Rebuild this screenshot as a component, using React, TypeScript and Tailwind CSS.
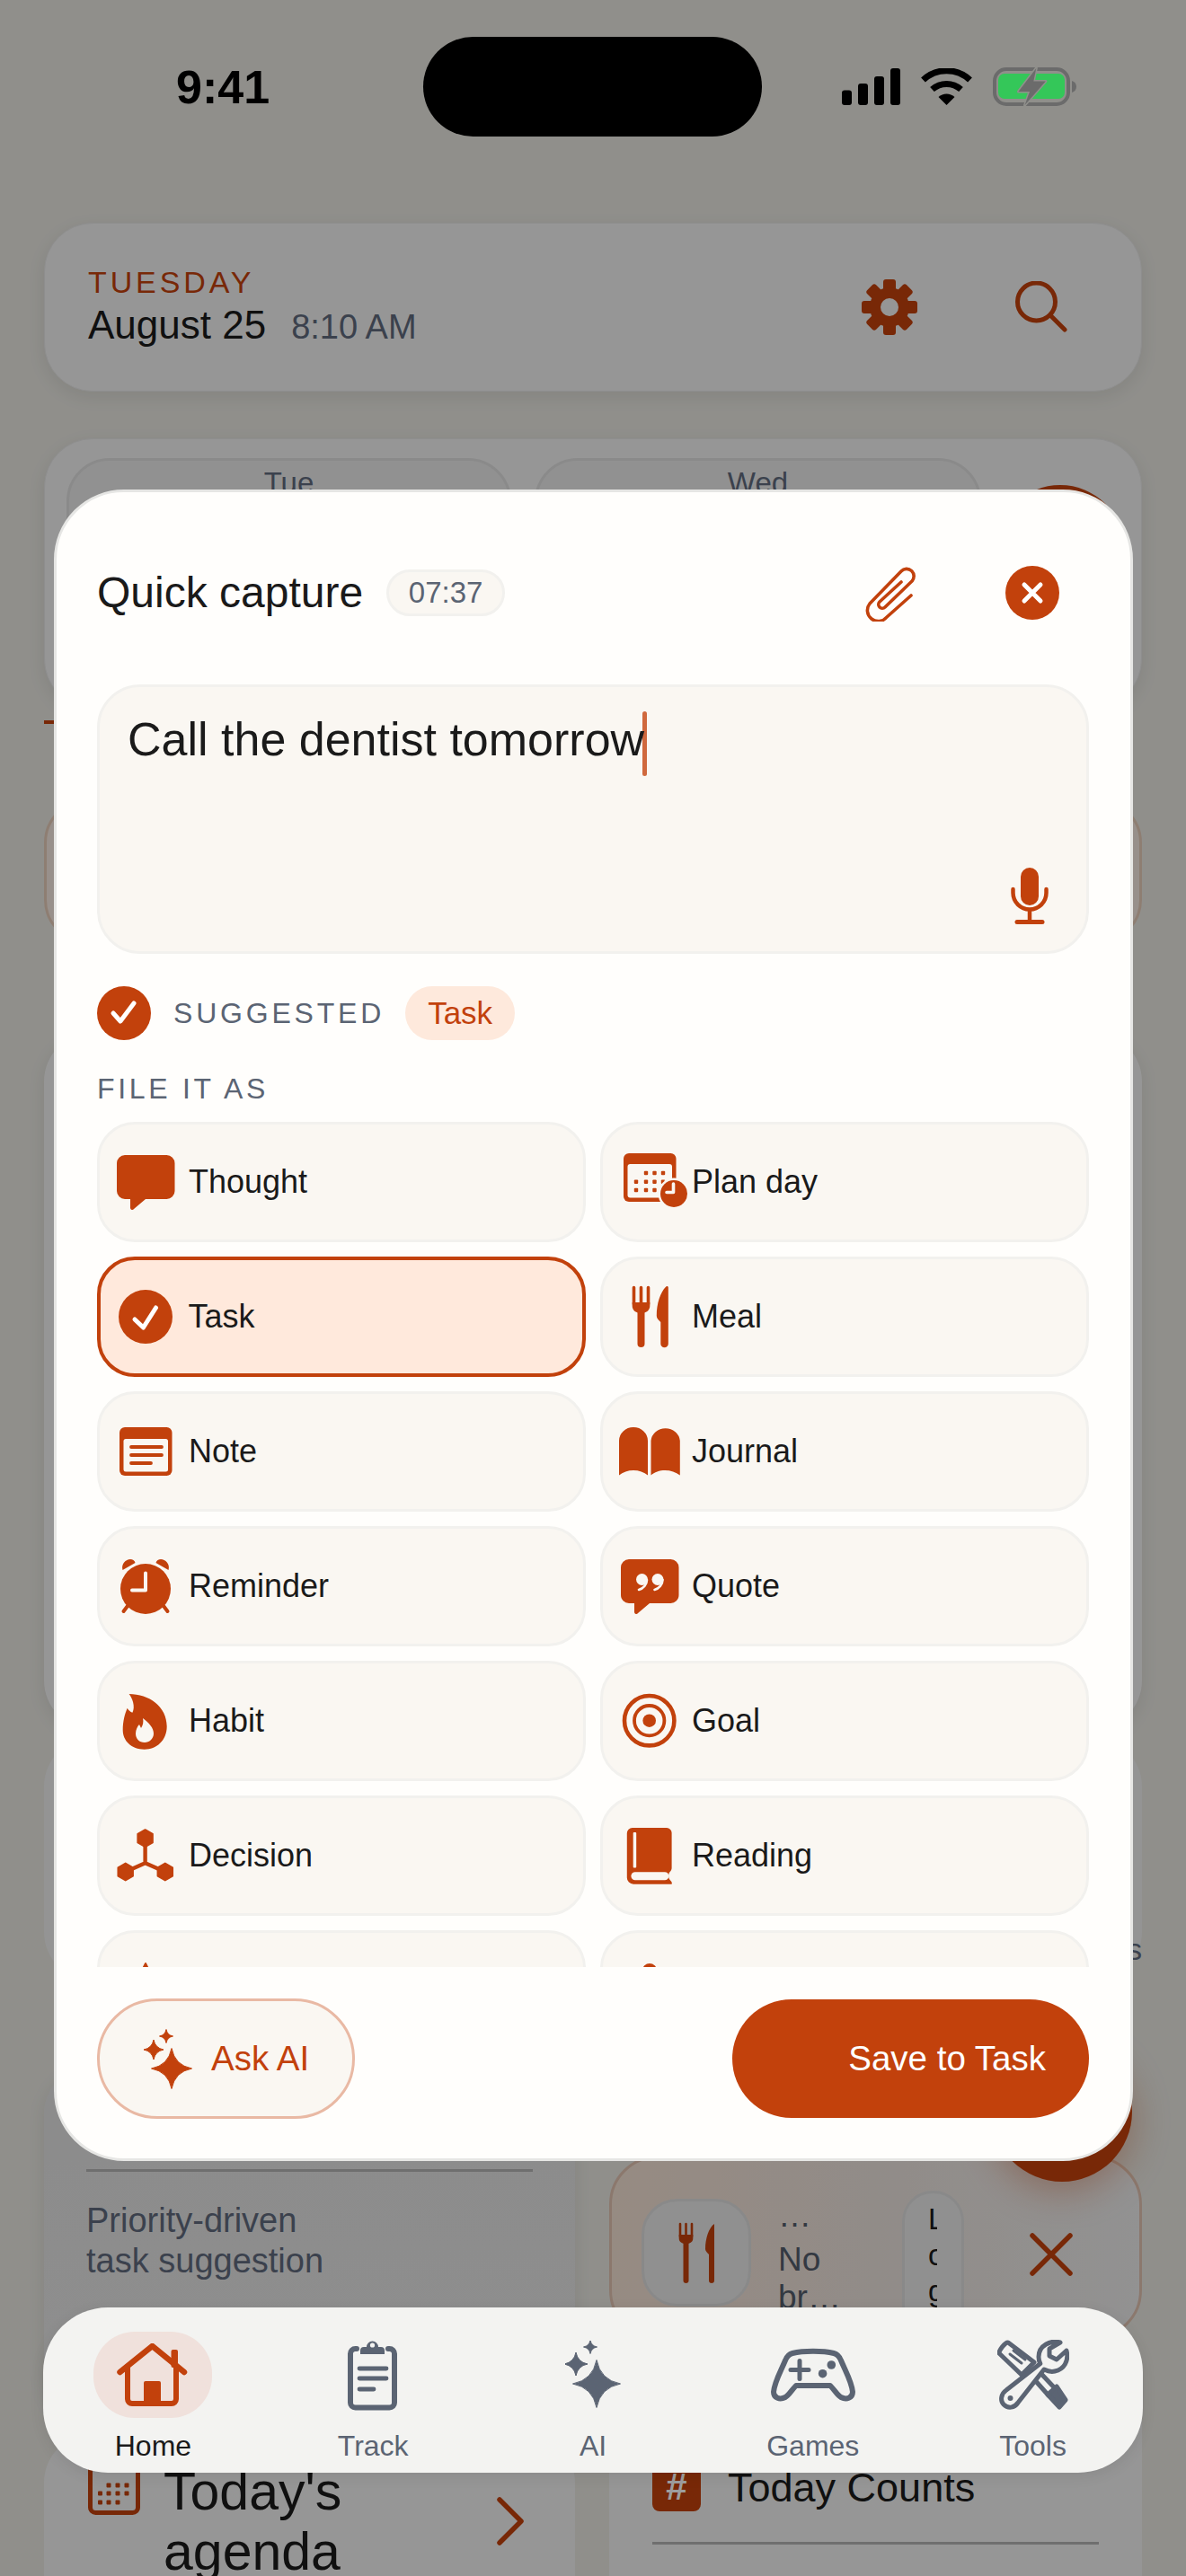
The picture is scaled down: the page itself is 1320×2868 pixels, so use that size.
import React from "react";

const ORANGE = "#c2410c";
const ITEM_BG = "#faf7f2";

// four point star used by the AI sparkles
function starPath(cx: number, cy: number, r: number) {
  const k = r * 0.16;
  return `M${cx} ${cy - r}Q${cx + k} ${cy - k} ${cx + r} ${cy}Q${cx + k} ${cy + k} ${cx} ${cy + r}Q${cx - k} ${cy + k} ${cx - r} ${cy}Q${cx - k} ${cy - k} ${cx} ${cy - r}Z`;
}

function hexPoints(cx: number, cy: number, r: number) {
  return [0, 60, 120, 180, 240, 300]
    .map((a) => {
      const t = (a * Math.PI) / 180;
      return `${cx + r * Math.sin(t)},${cy - r * Math.cos(t)}`;
    })
    .join(" ");
}

function IconBox({ children }: { children: React.ReactNode }) {
  return (
    <svg width="72" height="72" viewBox="0 0 72 72" className="shrink-0 overflow-visible" fill={ORANGE}>
      {children}
    </svg>
  );
}

const ThoughtIcon = () => (
  <IconBox>
    <path d="M13 6h46.5a9 9 0 0 1 9 9v31a9 9 0 0 1-9 9H36L23 66a2.2 2.2 0 0 1-4-1V55h-6a9 9 0 0 1-9-9V15a9 9 0 0 1 9-9z" />
  </IconBox>
);

const CheckIcon = () => (
  <IconBox>
    <circle cx="36" cy="36" r="30" />
    <path d="M24 39L33.5 48L47.5 26" fill="none" stroke="#fff" strokeWidth="5" strokeLinecap="round" strokeLinejoin="round" />
  </IconBox>
);

const NoteIcon = () => (
  <IconBox>
    <rect x="7" y="9" width="58.5" height="54" rx="6" />
    <rect x="11.5" y="22" width="49.5" height="36.5" rx="2.5" fill={ITEM_BG} />
    <path d="M20 31H54M20 40H54M20 49H42" stroke={ORANGE} strokeWidth="3.8" strokeLinecap="round" fill="none" />
  </IconBox>
);

const PlanDayIcon = () => (
  <IconBox>
    <rect x="8" y="4" width="58.5" height="54" rx="6" />
    <rect x="12.5" y="16" width="49.5" height="37.5" rx="3" fill={ITEM_BG} />
    {[
      [33, 26], [42.5, 26], [52, 26],
      [22, 35.7], [33, 35.7], [42.5, 35.7], [52, 35.7],
      [22, 45], [33, 45], [42.5, 45],
    ].map(([x, y]) => (
      <rect key={`${x}-${y}`} x={x - 2.2} y={y - 2.2} width="4.4" height="4.4" rx="1" />
    ))}
    <circle cx="64" cy="49" r="17.5" fill={ITEM_BG} />
    <circle cx="64" cy="49" r="15" />
    <path d="M63.5 38V47.5H56" stroke={ITEM_BG} strokeWidth="3.6" fill="none" strokeLinecap="round" strokeLinejoin="round" />
  </IconBox>
);

const MealIcon = () => (
  <IconBox>
    <path d="M19.5 3.5V22M27.5 3.5V22M35.5 3.5V22" stroke={ORANGE} strokeWidth="3.6" strokeLinecap="round" fill="none" />
    <path d="M17.7 20H37.3V24C37.3 29 33 32 27.5 32C22 32 17.7 29 17.7 24Z" />
    <rect x="23.5" y="28" width="8" height="42" rx="4" />
    <path d="M57.8 3.5C57.8 2 56 1.5 55 2.8C49 9 44.8 21 44.8 35C44.8 38 47 39.5 49.3 42V66A4.2 4.2 0 0 0 57.8 66Z" />
  </IconBox>
);

const JournalIcon = () => (
  <IconBox>
    <path d="M3 24a16 15 0 0 1 32 0V62.5C27 55 11 55 3 62.5Z" />
    <path d="M38.5 24a16.2 15 0 0 1 32.3 0V62.5C62 55 46 55 38.5 62.5Z" />
  </IconBox>
);

const ReminderIcon = () => (
  <IconBox>
    <circle cx="36" cy="39" r="28" />
    <path d="M10.5 18C8.5 11 14 6 19 6C21.5 6 24 7.5 24.5 10Z" />
    <path d="M61.5 18C63.5 11 58 6 53 6C50.5 6 48 7.5 47.5 10Z" />
    <path d="M16 58L11.5 64M56 58L60.5 64" stroke={ORANGE} strokeWidth="4" strokeLinecap="round" />
    <path d="M36 21.5V40.5H21" stroke={ITEM_BG} strokeWidth="4" fill="none" strokeLinecap="round" strokeLinejoin="round" />
  </IconBox>
);

const QuoteIcon = () => (
  <IconBox>
    <path d="M14 6h46.5a9 9 0 0 1 9 9v31a9 9 0 0 1-9 9H37L24 66a2.2 2.2 0 0 1-4-1V55h-6a9 9 0 0 1-9-9V15a9 9 0 0 1 9-9z" />
    <g fill={ITEM_BG}>
      <circle cx="28.5" cy="28.5" r="6.5" />
      <circle cx="46" cy="28.5" r="6.5" />
    </g>
    <path d="M34 29C34 34 30 38.5 25 40M51.5 29C51.5 34 47.5 38.5 42.5 40" stroke={ITEM_BG} strokeWidth="2.6" fill="none" strokeLinecap="round" />
  </IconBox>
);

const HabitIcon = () => (
  <IconBox>
    <path d="M17.6 6C40 6 59.7 20 59.7 42C59.7 58 48 67.7 34.8 67.7C20 67.7 10.7 58 10.7 46C10.7 36 13 28 15.7 21.7C17 24 19 26 21.4 26.7C25 20 21 10 17.6 6Z" />
    <path d="M33 33C40 38 45 44 45 50C45 56 40 60 35 60C29 60 25 56 25 50C25 46 27 42 29 40L31 44C33 41 34 37 33 33Z" fill={ITEM_BG} />
  </IconBox>
);

const GoalIcon = () => (
  <IconBox>
    <circle cx="36.7" cy="35.7" r="27.7" fill="none" stroke={ORANGE} strokeWidth="4.6" />
    <circle cx="36.7" cy="35.7" r="16.7" fill="none" stroke={ORANGE} strokeWidth="3.8" />
    <circle cx="36.7" cy="35.7" r="7.3" />
  </IconBox>
);

const DecisionIcon = () => (
  <IconBox>
    <path d="M35.6 16.7V44.3M35.6 44.3L13.7 54M35.6 44.3L57.8 54" stroke={ORANGE} strokeWidth="4.4" fill="none" />
    <polygon points={hexPoints(35.6, 16.7, 9.5)} stroke={ORANGE} strokeWidth="2" strokeLinejoin="round" />
    <polygon points={hexPoints(13.7, 54, 9.5)} stroke={ORANGE} strokeWidth="2" strokeLinejoin="round" />
    <polygon points={hexPoints(57.8, 54, 9.5)} stroke={ORANGE} strokeWidth="2" strokeLinejoin="round" />
  </IconBox>
);

const ReadingIcon = () => (
  <IconBox>
    <path d="M18 5H56A5.6 5.6 0 0 1 61.6 10.6V50C61.6 51.5 60.6 53 59.6 54C57.6 56 57.6 61 59.6 63C60.6 64 62.6 66 61.6 67.7H19A7.2 7.2 0 0 1 11.8 60.5V11A6 6 0 0 1 18 5Z" />
    <rect x="18.7" y="10" width="3.5" height="39.5" rx="1" fill={ITEM_BG} />
    <rect x="16.4" y="54.3" width="42" height="9" rx="4.5" fill={ITEM_BG} />
  </IconBox>
);

const TriangleStub = () => (
  <IconBox>
    <path d="M36 6L62 58H10Z" stroke={ORANGE} strokeWidth="2" strokeLinejoin="round" />
  </IconBox>
);

const PinStub = () => (
  <IconBox>
    <circle cx="37" cy="14" r="8" />
  </IconBox>
);

function FileItem({ label, icon, selected }: { label?: string; icon: React.ReactNode; selected?: boolean }) {
  return (
    <div
      className={
        selected
          ? "flex h-[134px] items-center gap-[12px] rounded-[42px] border-[4.5px] border-[#c2410c] bg-[#ffe9dc] pl-[13.5px]"
          : "flex h-[134px] items-center gap-[12px] rounded-[42px] border-[3px] border-[#f2f1ee] bg-[#faf7f2] pl-[15px]"
      }
    >
      {icon}
      {label && <span className="text-[36px] leading-[44px] text-[#1a1a1a]">{label}</span>}
    </div>
  );
}

function Sparkles({ w, h, stars, color }: { w: number; h: number; stars: number[][]; color: string }) {
  return (
    <svg width={w} height={h} viewBox={`0 0 ${w} ${h}`} fill={color} className="shrink-0">
      {stars.map(([x, y, r]) => (
        <path key={`${x}-${y}`} d={starPath(x, y, r)} stroke={color} strokeWidth="1" strokeLinejoin="round" />
      ))}
    </svg>
  );
}

function NavItem({ label, active, children }: { label: string; active?: boolean; children: React.ReactNode }) {
  return (
    <div className="flex flex-col items-center">
      <div className={active ? "flex h-[96px] w-[132px] items-center justify-center rounded-[46px] bg-[#f0e1dc]" : "flex h-[96px] w-[132px] items-center justify-center"}>
        {children}
      </div>
      <span className={active ? "mt-[12px] text-[32px] leading-[38px] text-[#1a1a1a]" : "mt-[12px] text-[32px] leading-[38px] text-[#5b6473]"}>{label}</span>
    </div>
  );
}

function Background() {
  const teeth = [0, 45, 90, 135, 180, 225, 270, 315];
  return (
    <div className="flex flex-col px-[49px] pt-[248px]">
      {/* date header */}
      <div className="flex h-[188px] items-center rounded-[54px] border border-[#e6e6e6] bg-[#f2f2f2] pl-[48px] pr-[82px] shadow-[0_6px_20px_rgba(0,0,0,0.08)]">
        <div>
          <p className="text-[34px] leading-[40px] tracking-[3.9px] text-[#c2410c]">TUESDAY</p>
          <p className="mt-[2px] flex items-baseline text-[44px] leading-[52px] text-[#1a1a1a]">
            August 25
            <span className="ml-[28px] text-[38px] text-[#606a7c]">8:10 AM</span>
          </p>
        </div>
        <svg width="62" height="62" viewBox="0 0 62 62" fill={ORANGE} className="ml-auto">
          {teeth.map((a) => (
            <rect key={a} x="24" y="0" width="14" height="16" rx="3" transform={`rotate(${a} 31 31)`} />
          ))}
          <circle cx="31" cy="31" r="22" />
          <circle cx="31" cy="31" r="10" fill="#f2f2f2" />
        </svg>
        <svg width="58" height="58" viewBox="0 0 58 58" fill="none" stroke={ORANGE} strokeWidth="5" strokeLinecap="round" className="ml-[109px]">
          <circle cx="23.5" cy="23" r="21" />
          <path d="M39 38L55 54" />
        </svg>
      </div>

      {/* week strip */}
      <div className="mt-[52px] flex h-[300px] gap-[26px] rounded-[54px] border border-[#e6e6e6] bg-[#f2f2f2] pl-[24px] pt-[21px] shadow-[0_6px_20px_rgba(0,0,0,0.08)]">
        <div className="h-[200px] w-[495px] rounded-[48px] border-[3px] border-[#dfdfdf] bg-[#ebebeb] pt-[5px] text-center text-[33px] leading-[40px] text-[#606a7c]">Tue</div>
        <div className="h-[200px] w-[497px] rounded-[48px] border-[3px] border-[#dfdfdf] bg-[#ebebeb] pt-[5px] text-center text-[33px] leading-[40px] text-[#606a7c]">Wed</div>
      </div>

      <div className="mt-[14px] h-[4px] w-[30px] bg-[#c2410c]" />
      <div className="mt-[84px] h-[160px] rounded-[48px] border-[3px] border-[#e6cbb9] bg-[#f6e9e0]" />
      <div className="mt-[100px] h-[775px] rounded-[54px] bg-[#f2f2f2] shadow-[0_6px_20px_rgba(0,0,0,0.08)]" />

      {/* two column cards */}
      <div className="mt-[10px] grid grid-cols-[591px_593px] gap-x-[38px]">
        <div className="flex flex-col">
          <div className="h-[270px] rounded-[54px] bg-[#efefef]" />
          <div className="mt-[95px] h-[395px] rounded-[54px] bg-gradient-to-b from-[#e2e2e2] to-[#e6e6e6] px-[47px] shadow-[0_6px_20px_rgba(0,0,0,0.08)]">
            <div className="mt-[115px] h-[3px] bg-[#b4b4b4]" />
            <p className="mt-[32px] text-[38px] leading-[45px] text-[#606a7c]">
              Priority-driven
              <br />
              task suggestion
            </p>
          </div>
          <div className="mt-[15px] flex h-[300px] items-start rounded-[54px] bg-[#f2f2f2] pl-[49px] pt-[28px]">
            <svg width="58" height="62" viewBox="0 0 58 62" fill={ORANGE} className="shrink-0">
              <rect x="2.5" y="2.5" width="53" height="57" rx="6" fill="none" stroke={ORANGE} strokeWidth="5" />
              {[
                [23, 29], [33, 29], [43, 29],
                [13.5, 38], [23, 38], [33, 38], [43, 38],
                [13.5, 48], [23, 48], [33, 48],
              ].map(([x, y]) => (
                <rect key={`${x}-${y}`} x={x - 2.5} y={y - 2.5} width="5" height="5" rx="1" />
              ))}
            </svg>
            <p className="ml-[26px] mt-[3px] w-[260px] text-[59px] leading-[67px] text-[#1a1a1a]">Today's agenda</p>
            <svg width="30" height="54" viewBox="0 0 30 54" fill="none" stroke={ORANGE} strokeWidth="5.5" strokeLinecap="round" strokeLinejoin="round" className="ml-[111px] mt-[42px]">
              <path d="M3 3L27 27L3 51" />
            </svg>
          </div>
        </div>

        <div className="flex flex-col">
          <div className="h-[270px] rounded-[54px] bg-[#efefef] pt-[216px] text-right text-[33px] leading-[40px] text-[#606a7c]">s</div>
          <div className="mt-[195px] flex h-[204px] items-start overflow-hidden rounded-[54px] border-[3px] border-[#e0c2b0] bg-gradient-to-r from-[#f3e0d2] via-[#ebe2dc] to-[#ececec] pl-[33px]">
            <div className="mt-[45px] flex h-[120px] w-[122px] shrink-0 items-center justify-center rounded-[40px] border-[3px] border-[#dedede] bg-[#e8e8e8]">
              <svg width="40" height="68" viewBox="0 0 40 68" fill={ORANGE}>
                <path d="M2 2V16M8.5 2V16M15 2V16" stroke={ORANGE} strokeWidth="2.6" strokeLinecap="round" fill="none" />
                <path d="M.7 14H16.3V18C16.3 22 13 24 8.5 24C4 24 .7 22 .7 18Z" />
                <rect x="5.5" y="20" width="6" height="48" rx="3" />
                <path d="M40 2C34 6 30 18 30 30C30 32 32 34 34 36V65A3 3 0 0 0 40 65Z" />
              </svg>
            </div>
            <div className="ml-[30px] mt-[50px] w-[138px] shrink-0 text-[37px] leading-[42px] text-[#535c6b]">
              <p className="-translate-y-[7px]">…</p>
              <p>No</p>
              <p>br…</p>
            </div>
            <div className="mt-[36px] flex h-[170px] w-[69px] shrink-0 flex-col rounded-[34px] border-[3px] border-[#dedede] bg-[#e8e8e8] pl-[26px] pt-[9px] text-[33px] leading-[40px] text-[#1a1a1a]">
              <span className="block h-[40px] w-[10px] overflow-hidden">L</span>
              <span className="block h-[40px] w-[10px] overflow-hidden">o</span>
              <span className="block h-[40px] w-[10px] overflow-hidden">g</span>
            </div>
            <svg width="48" height="48" viewBox="0 0 48 48" fill="none" stroke={ORANGE} strokeWidth="5.5" strokeLinecap="round" className="ml-[73px] mt-[83px] shrink-0">
              <path d="M3 3L45 45M45 3L3 45" />
            </svg>
          </div>
          <div className="mt-[21px] h-[300px] rounded-[54px] bg-[#f2f2f2] px-[48px]">
            <div className="flex items-start pt-[101px]">
              <div className="flex h-[70px] w-[54px] items-center justify-center rounded-[8px] bg-[#c2410c] pt-[14px] text-[42px] font-bold text-white">#</div>
              <p className="ml-[30px] mt-[18px] text-[45px] leading-[52px] text-[#1a1a1a]">Today Counts</p>
            </div>
            <div className="mt-[34px] h-[3px] bg-[#b4b4b4]" />
          </div>
        </div>
      </div>
    </div>
  );
}

function StatusBar() {
  return (
    <div className="absolute left-0 top-[41px] flex h-[111px] w-full items-center">
      <span className="ml-[196px] w-[106px] text-[52px] font-bold leading-none text-black">9:41</span>
      <div className="ml-[169px] h-[111px] w-[377px] rounded-full bg-black" />
      <svg width="65" height="41" viewBox="0 0 65 41" fill="#000" className="ml-[89px]">
        <rect x="0" y="24.5" width="11" height="16.5" rx="3" />
        <rect x="18" y="17" width="11" height="24" rx="3" />
        <rect x="36" y="9" width="11" height="32" rx="3" />
        <rect x="54" y="0" width="11" height="41" rx="3" />
      </svg>
      <svg width="57" height="41" viewBox="0 0 57 41" fill="none" className="ml-[23px]">
        <path d="M2.5 13A38 38 0 0 1 54.5 13" stroke="#000" strokeWidth="7" />
        <path d="M12.5 23.5A24 24 0 0 1 44.5 23.5" stroke="#000" strokeWidth="7" />
        <path d="M28.5 41L19.5 32A13 13 0 0 1 37.5 32Z" fill="#000" />
      </svg>
      <svg width="93" height="43" viewBox="0 0 93 43" fill="none" className="ml-[23px]">
        <rect x="2" y="2" width="82" height="39" rx="13" stroke="#6b6b6b" strokeWidth="4" />
        <rect x="6" y="7" width="74" height="28" rx="7" fill="#34c759" />
        <path d="M88 15C91 16 93 18 93 21.5C93 25 91 27 88 28Z" fill="#6b6b6b" />
        <path d="M48.3 1L28.5 27H41L35.6 42L58.8 15.5H45.3Z" fill="#6b6b6b" stroke="#90908c" strokeWidth="3" strokeLinejoin="round" paintOrder="stroke" />
      </svg>
    </div>
  );
}

function QuickCapture() {
  return (
    <div className="absolute left-[60px] top-[545px] flex h-[1861px] w-[1201px] flex-col rounded-[78px] border-[3px] border-[#e6e6e4] bg-[#fffefc] pl-[45px] pr-[46px] pt-[82px]">
      <div className="flex h-[60px] items-center">
        <h1 className="text-[48px] font-medium leading-[56px] text-[#1a1a1a]">Quick capture</h1>
        <span className="ml-[26px] flex h-[52px] w-[132px] items-center justify-center rounded-full border-[3px] border-[#f2f1ee] bg-[#faf7f2] text-[33px] text-[#5b6473]">07:37</span>
        <svg width="60" height="64" viewBox="0 0 60 64" fill="none" stroke={ORANGE} strokeWidth="3.6" strokeLinecap="round" strokeLinejoin="round" className="ml-auto -translate-x-[2px]">
          <path d="M53 35L26 59A11.5 11.5 0 0 1 7 44L42 8A8 8 0 0 1 54 19L24 48A4 4 0 0 1 18 42L42 20" />
        </svg>
        <div className="ml-[96px] mr-[33px] flex h-[60px] w-[60px] items-center justify-center rounded-full bg-[#c2410c]">
          <svg width="26" height="26" viewBox="0 0 26 26" fill="none" stroke="#fff" strokeWidth="5" strokeLinecap="round">
            <path d="M4 4L22 22M22 4L4 22" />
          </svg>
        </div>
      </div>

      <div className="relative mt-[72px] h-[300px] rounded-[48px] border-[3px] border-[#f2f1ee] bg-[#faf7f2] pl-[31px] pt-[27px]">
        <div className="flex items-center">
          <span className="-translate-y-[5px] text-[52px] leading-[60px] text-[#1a1a1a]">Call the dentist tomorrow</span>
          <span className="-ml-[2px] h-[72px] w-[5px] rounded-full bg-[#d0693e]" />
        </div>
        <svg width="42" height="63" viewBox="0 0 42 63" fill="none" className="absolute bottom-[30px] right-[42px]">
          <rect x="11" y="0" width="20" height="42" rx="10" fill={ORANGE} />
          <path d="M2.5 24V28A18.5 18.5 0 0 0 39.5 28V24" stroke={ORANGE} strokeWidth="4.5" strokeLinecap="round" />
          <path d="M21 47V60" stroke={ORANGE} strokeWidth="4.5" />
          <path d="M7 60.5H35" stroke={ORANGE} strokeWidth="5" strokeLinecap="round" />
        </svg>
      </div>

      <div className="mt-[36px] flex h-[60px] items-center">
        <div className="flex h-[60px] w-[60px] items-center justify-center rounded-full bg-[#c2410c]">
          <svg width="34" height="34" viewBox="0 0 34 34" fill="none" stroke="#fff" strokeWidth="5" strokeLinecap="round" strokeLinejoin="round">
            <path d="M5 17L13 26L28 6" />
          </svg>
        </div>
        <span className="ml-[25px] text-[32px] leading-none tracking-[3.8px] text-[#5b6473]">SUGGESTED</span>
        <span className="ml-[23px] flex h-[60px] w-[122px] items-center justify-center rounded-full bg-[#fee9dc] text-[35px] text-[#c2410c]">Task</span>
      </div>

      <p className="mt-[36px] text-[32px] leading-[36px] tracking-[3.7px] text-[#5b6473]">FILE IT AS</p>

      <div className="mt-[19px] h-[941px] overflow-hidden">
        <div className="grid grid-cols-2 gap-x-[16px] gap-y-[16px]">
          <FileItem label="Thought" icon={<ThoughtIcon />} />
          <FileItem label="Plan day" icon={<PlanDayIcon />} />
          <FileItem label="Task" icon={<CheckIcon />} selected />
          <FileItem label="Meal" icon={<MealIcon />} />
          <FileItem label="Note" icon={<NoteIcon />} />
          <FileItem label="Journal" icon={<JournalIcon />} />
          <FileItem label="Reminder" icon={<ReminderIcon />} />
          <FileItem label="Quote" icon={<QuoteIcon />} />
          <FileItem label="Habit" icon={<HabitIcon />} />
          <FileItem label="Goal" icon={<GoalIcon />} />
          <FileItem label="Decision" icon={<DecisionIcon />} />
          <FileItem label="Reading" icon={<ReadingIcon />} />
          <FileItem icon={<TriangleStub />} />
          <FileItem icon={<PinStub />} />
        </div>
      </div>

      <div className="mt-[35px] flex items-center justify-between">
        <button className="flex h-[134px] w-[287px] items-center rounded-full border-[3px] border-[#e9b9a4] bg-[#faf7f2] pl-[49px] text-[38.5px] text-[#c2410c]">
          <Sparkles w={54} h={67} color={ORANGE} stars={[[31, 44, 22.5], [11, 23, 11], [25, 8, 7.5]]} />
          <span className="ml-[21px]">Ask AI</span>
        </button>
        <button className="flex h-[132px] w-[397px] items-center justify-end rounded-full bg-[#c2410c] pr-[48px] text-[38.5px] text-white">Save to Task</button>
      </div>
    </div>
  );
}

function TabBar() {
  return (
    <div className="absolute left-[48px] top-[2569px] grid h-[184px] w-[1224px] grid-cols-5 rounded-[72px] bg-[#f3f3f1] pt-[27px] shadow-[0_4px_16px_rgba(0,0,0,0.08)]">
      <NavItem label="Home" active>
        <svg width="80" height="70" viewBox="0 0 80 70" fill="none" stroke={ORANGE} strokeLinecap="round" strokeLinejoin="round">
          <path d="M3.5 32L39.5 3L75 32" strokeWidth="6.5" />
          <path d="M12 26V62A5 5 0 0 0 17 67H61A5 5 0 0 0 66 62V26" strokeWidth="6" />
          <rect x="30" y="42" width="19" height="25" rx="2" fill={ORANGE} stroke="none" />
          <rect x="60.5" y="7" width="7.5" height="20" rx="2" fill={ORANGE} stroke="none" />
        </svg>
      </NavItem>
      <NavItem label="Track">
        <svg width="56" height="80" viewBox="0 0 56 80" fill="none" stroke="#5b6473" strokeLinecap="round">
          <path d="M10 11H8.5A5.5 5.5 0 0 0 3 16.5V71A5.5 5.5 0 0 0 8.5 76.5H46.5A5.5 5.5 0 0 0 52 71V16.5A5.5 5.5 0 0 0 46.5 11H45" strokeWidth="6" />
          <path d="M14 17V13A4 4 0 0 1 18 9H21A6.5 6.5 0 0 1 34 9H37A4 4 0 0 1 41 13V17Z" fill="#5b6473" stroke="none" />
          <circle cx="27.5" cy="7" r="2.6" fill="#f3f3f1" stroke="none" />
          <path d="M13 33H43M13 44H43M13 56H29" strokeWidth="4.8" />
        </svg>
      </NavItem>
      <NavItem label="AI">
        <Sparkles w={62} h={76} color="#5b6473" stars={[[35, 48, 26.5], [12, 26, 13], [28, 7, 7.5]]} />
      </NavItem>
      <NavItem label="Games">
        <svg width="94" height="60" viewBox="0 0 94 60" fill="none" stroke="#5b6473" strokeLinecap="round" strokeLinejoin="round">
          <path d="M24 6C36 3 58 3 70 6C74 7 76 9 78 14C84 28 90 38 91 49C91 56 84 58 78 55C74 53 71 47 66 42H28C23 47 20 53 16 55C10 58 3 56 3 49C4 38 10 28 16 14C18 9 20 7 24 6Z" strokeWidth="6" />
          <path d="M32 14.5V34.5M22 24.5H42" strokeWidth="5" />
          <circle cx="67.3" cy="19" r="4.8" fill="#5b6473" stroke="none" />
          <circle cx="57.6" cy="28.7" r="4.8" fill="#5b6473" stroke="none" />
        </svg>
      </NavItem>
      <NavItem label="Tools">
        <svg width="80" height="78" viewBox="0 0 80 78" fill="none" stroke="#5b6473" strokeWidth="5" strokeLinecap="round" strokeLinejoin="round">
          <path d="M12 3L41 25L27 39L2 15C1 13 9 2 12 3Z" />
          <path d="M14 16L27 26M18 12L31 22" strokeWidth="3" />
          <path d="M41 44L57 62M49 38L66 56" />
          <path d="M56 61L66 52L76 67L69 75Z" fill="#5b6473" />
          <path d="M70 3C60 0 46 6 46 19C46 22 46.7 24.5 47.8 26.5L10 56C4 60 3 68 7 72C12 77 19 76 23 70L52 33C56 35 60 36 64 35C74 33 80 24 77 12L66 22L58 18L58 10Z" fill="#f3f3f1" />
          <circle cx="14.5" cy="65" r="3" fill="#5b6473" stroke="none" />
        </svg>
      </NavItem>
    </div>
  );
}

export default function App() {
  return (
    <div className="relative h-[2868px] w-[1320px] overflow-hidden bg-[#e8e7e1] font-['Liberation_Sans',Arial,sans-serif]">
      <Background />
      {/* orange round buttons sitting behind the sheet */}
      <div className="absolute left-[1109px] top-[540px] h-[142px] w-[142px] rounded-full bg-[#c2410c]" />
      <div className="absolute left-[1104px] top-[2273px] h-[156px] w-[156px] rounded-full bg-[#c2410c] shadow-[0_10px_40px_rgba(194,65,12,0.35)]" />
      <div className="absolute inset-0 bg-black/[0.38]" />
      <StatusBar />
      <QuickCapture />
      <TabBar />
    </div>
  );
}
